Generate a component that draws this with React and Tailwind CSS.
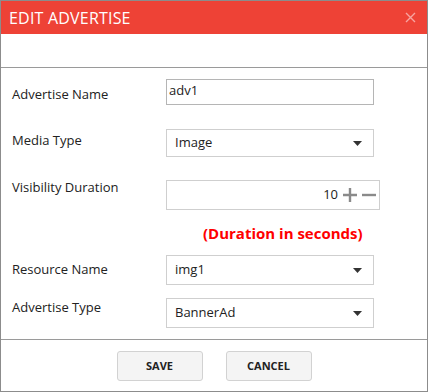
import React from 'react';

const font = { fontFamily: '"Open Sans", "Noto Sans", sans-serif' };

const Caret = () => (
  <svg width="9" height="5" viewBox="0 0 9 5" className="shrink-0">
    <path d="M0 0 H9 L4.5 5 Z" fill="#333" />
  </svg>
);

const SelectBox = ({ value, className }) => (
  <div className={`w-[208px] border border-[#cfcfcf] bg-white flex items-center justify-between pl-[8px] pr-[11px] text-[13px] text-[#222] ${className}`}>
    <span>{value}</span>
    <Caret />
  </div>
);

const Label = ({ children, className }) => (
  <div className={`w-[165px] shrink-0 pl-[11px] text-[13px] text-[#222] ${className}`}>{children}</div>
);

export default function App() {
  return (
    <div className="w-[428px] h-[392px] border border-[#8c8c8c] bg-white flex flex-col" style={font}>
      {/* Header */}
      <div className="h-[33px] bg-[#ee4236] flex items-center justify-between pl-[8px] pr-[11px] shrink-0">
        <span className="text-white text-[16px] tracking-[0.2px]">EDIT ADVERTISE</span>
        <svg width="11" height="11" viewBox="0 0 11 11">
          <path d="M1 1 L10 10 M10 1 L1 10" stroke="#f7a4a0" strokeWidth="1.4" />
        </svg>
      </div>
      <div className="h-[34px] shrink-0 border-b border-[#9a9a9a]" />

      {/* Form */}
      <div className="flex-1 flex flex-col">
        <div className="flex items-center mt-[11px]">
          <Label className="pt-[6px]">Advertise Name</Label>
          <div className="w-[208px] h-[26px] border border-[#b5b5b5] pl-[2px] text-[13px] text-[#222] leading-[20px]">adv1</div>
        </div>

        <div className="flex items-center mt-[24px]">
          <Label className="-mt-[4px]">Media Type</Label>
          <SelectBox value="Image" className="h-[28px]" />
        </div>

        <div className="flex items-center mt-[23px]">
          <Label className="-mt-[14px]">Visibility Duration</Label>
          <div className="w-[214px] h-[30px] border border-[#cfcfcf] flex items-center justify-end pr-[2px] text-[13px] text-[#222]">
            <span className="mr-[4px]">10</span>
            <svg width="16" height="16" viewBox="0 0 16 16">
              <path d="M8 1 V15 M1 8 H15" stroke="#8a8a8a" strokeWidth="2.4" />
            </svg>
            <svg width="16" height="16" viewBox="0 0 16 16" className="ml-[3px]">
              <path d="M1 8 H15" stroke="#8a8a8a" strokeWidth="2.4" />
            </svg>
          </div>
        </div>

        <div className="pl-[202px] mt-[13px] text-[#ff0000] font-bold text-[15px] leading-[21px]">(Duration in seconds)</div>

        <div className="flex items-center mt-[11px]">
          <Label>Resource Name</Label>
          <SelectBox value="img1" className="h-[30px]" />
        </div>

        <div className="flex items-center mt-[13px]">
          <Label className="-mt-[10px]">Advertise Type</Label>
          <SelectBox value="BannerAd" className="h-[30px]" />
        </div>
      </div>

      {/* Footer */}
      <div className="h-[52px] shrink-0 border-t border-[#9a9a9a] flex items-start justify-center gap-[23px] pt-[11px]">
        <button className="w-[86px] h-[30px] rounded-[3px] border border-[#d2d2d2] bg-[#f4f4f4] text-[11px] font-bold text-[#222]">SAVE</button>
        <button className="w-[86px] h-[30px] rounded-[3px] border border-[#d2d2d2] bg-[#f4f4f4] text-[11px] font-bold text-[#222]">CANCEL</button>
      </div>
    </div>
  );
}
